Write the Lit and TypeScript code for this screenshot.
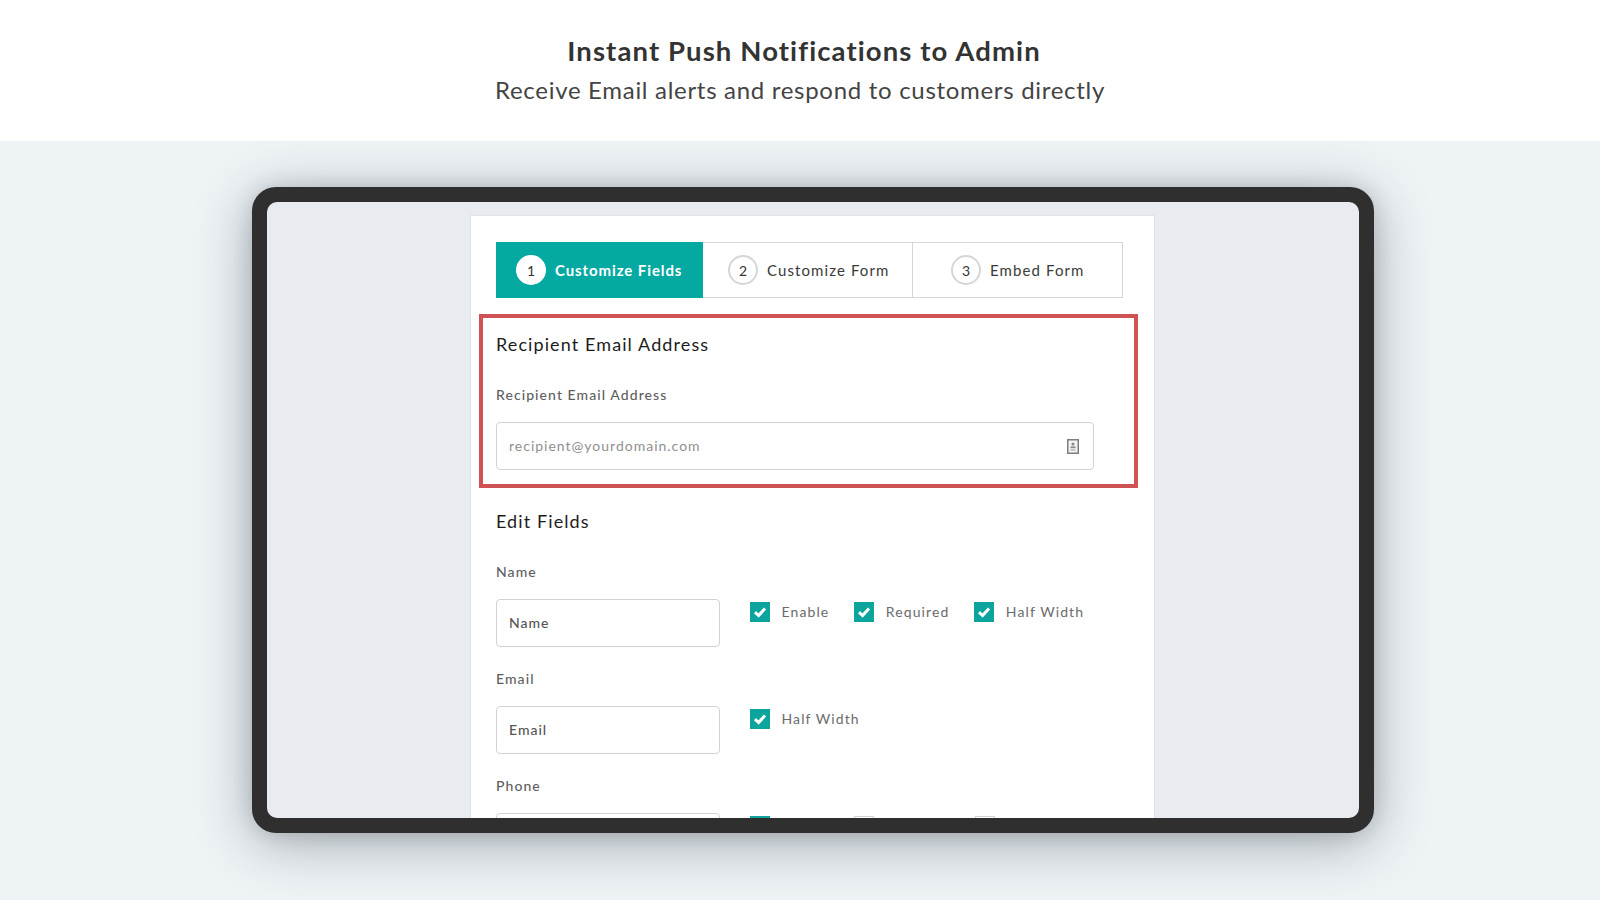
import { LitElement, html, css } from "lit";
import { customElement } from "lit/decorators.js";

const check = html`<svg class="tick" viewBox="0 0 20 20" aria-hidden="true"><path d="M5 10.2 8.6 13.6 15 6.6" fill="none" stroke="#fff" stroke-width="3"/></svg>`;

@customElement("app-root")
export class AppRoot extends LitElement {
  static styles = css`
    :host { display: block; height: 900px; overflow: hidden; background: #eef3f6; font-family: Lato, "Liberation Sans", sans-serif; }
    .head { height: 141px; background: #fff; display: flex; flex-direction: column; align-items: center; box-sizing: border-box; padding: 33px 0 0; color: #333; }
    .head h1 { margin: 0; padding-left: 8px; font: 700 27.5px/35px Lato, sans-serif; letter-spacing: 1.1px; color: #333; }
    .head p { margin: 5px 0 0; font: 400 24px/34px Lato, sans-serif; letter-spacing: .7px; color: #444; }
    .stage { padding: 46px 0 0 252px; }
    .device { width: 1122px; height: 646px; box-sizing: border-box; border: 15px solid #2f2f2f; border-radius: 24px; box-shadow: 0 10px 55px rgba(30,40,50,.36), 0 0 20px rgba(30,40,50,.14); background: #2f2f2f; }
    .screen { height: 100%; background: #e8ebf0; border-radius: 10px; overflow: hidden; padding-top: 13px; box-sizing: border-box; }
    .card { width: 685px; box-sizing: border-box; margin-left: 203px; background: #fff; border: 1px solid #e0e3e6; border-bottom: 0; padding: 26px 24px 0 25px; height: 700px; }
    .tabs { display: grid; grid-template-columns: 207px 210px 210px; height: 56px; box-sizing: border-box; }
    .tab { display: flex; align-items: center; gap: 9px; box-sizing: border-box; border: 1px solid #d4d6d8; border-left: 0; font-size: 15px; letter-spacing: 1.1px; color: #3a3a3a; }
    .tab.on { background: #04a9a1; border: 0; color: #fff; font-weight: 700; padding-left: 20px; letter-spacing: .9px; }
    .tab.two { padding-left: 25px; }
    .tab.three { padding-left: 38px; }
    .num { width: 30px; height: 30px; box-sizing: border-box; border-radius: 50%; border: 2px solid #d6d6d6; background: #fff; display: flex; align-items: center; justify-content: center; font-size: 14px; font-weight: 400; letter-spacing: 0; color: #333; }
    .on .num { border: 0; }
    .alert { width: 659px; height: 174px; box-sizing: border-box; margin: 16px 0 0 -17px; border: 4px solid #cf5354; padding: 13px 13px 0; }
    h2 { margin: 0; font: 400 18px/26px Lato, sans-serif; letter-spacing: 1.1px; color: #1d1d1d; }
    label { display: block; font-size: 14px; line-height: 18px; font-weight: 500; letter-spacing: 1.07px; color: #5f5f5f; }
    .alert label { margin-top: 29px; }
    .box { box-sizing: border-box; height: 48px; border: 1px solid #d2d2d2; border-radius: 4px; background: #fff; display: flex; align-items: center; padding: 0 12px 2px; font-size: 14px; letter-spacing: 1px; margin-top: 18px; color: #555; font-weight: 500; }
    .wide { width: 598px; justify-content: space-between; color: #8f8f8f; font-weight: 400; padding-right: 14px; }
    .wide svg { width: 12px; height: 15px; display: block; margin-top: 2px; }
    .fields { padding-top: 20px; }
    .fields label { margin-top: 0; }
    .row { margin-top: 23px; }
    .first { margin-top: 29px; }
    .line { display: flex; align-items: flex-start; }
    .short { width: 224px; }
    .checks { display: flex; margin: 21px 0 0 30px; }
    .ck { display: flex; align-items: center; gap: 11.5px; font-size: 14px; line-height: 20px; letter-spacing: 1.1px; color: #6b6b6b; }
    .ck + .ck { margin-left: 25px; }
    .cb { width: 20px; height: 20px; box-sizing: border-box; background: #0ba59e; flex: none; }
    .cb.off { background: #fff; border: 1px solid #d2d2d2; }
    .tick { display: block; width: 20px; height: 20px; }
    .g1 { margin-left: 84px; }
    .g2 { margin-left: 101px; }
  `;

  private ck(t: string) {
    return html`<div class="ck"><span class="cb">${check}</span>${t}</div>`;
  }

  render() {
    return html`
      <header class="head">
        <h1>Instant Push Notifications to Admin</h1>
        <p>Receive Email alerts and respond to customers directly</p>
      </header>
      <section class="stage">
        <div class="device">
          <div class="screen">
            <div class="card">
              <div class="tabs">
                <div class="tab on"><span class="num">1</span>Customize Fields</div>
                <div class="tab two"><span class="num">2</span>Customize Form</div>
                <div class="tab three"><span class="num">3</span>Embed Form</div>
              </div>
              <div class="alert">
                <h2>Recipient Email Address</h2>
                <label>Recipient Email Address</label>
                <div class="box wide">recipient@yourdomain.com
                  <svg viewBox="0 0 12 15" aria-hidden="true"><rect x=".75" y=".75" width="10.5" height="13.5" fill="#f4f4f4" stroke="#7d7d7d" stroke-width="1.5"/><circle cx="6" cy="5" r="1.6" fill="#8a8a8a"/><rect x="3.4" y="7.4" width="5.2" height="1.8" fill="#8a8a8a"/><rect x="3.4" y="10.3" width="5.2" height="1.4" fill="#b5b5b5"/></svg>
                </div>
              </div>
              <div class="fields">
                <h2>Edit Fields</h2>
                <div class="row first">
                  <label>Name</label>
                  <div class="line"><div class="box short">Name</div><div class="checks">${this.ck("Enable")}${this.ck("Required")}${this.ck("Half Width")}</div></div>
                </div>
                <div class="row">
                  <label>Email</label>
                  <div class="line"><div class="box short">Email</div><div class="checks">${this.ck("Half Width")}</div></div>
                </div>
                <div class="row">
                  <label>Phone</label>
                  <div class="line"><div class="box short"></div><div class="checks"><span class="cb">${check}</span><span class="cb off g1"></span><span class="cb off g2"></span></div></div>
                </div>
              </div>
            </div>
          </div>
        </div>
      </section>
    `;
  }
}
